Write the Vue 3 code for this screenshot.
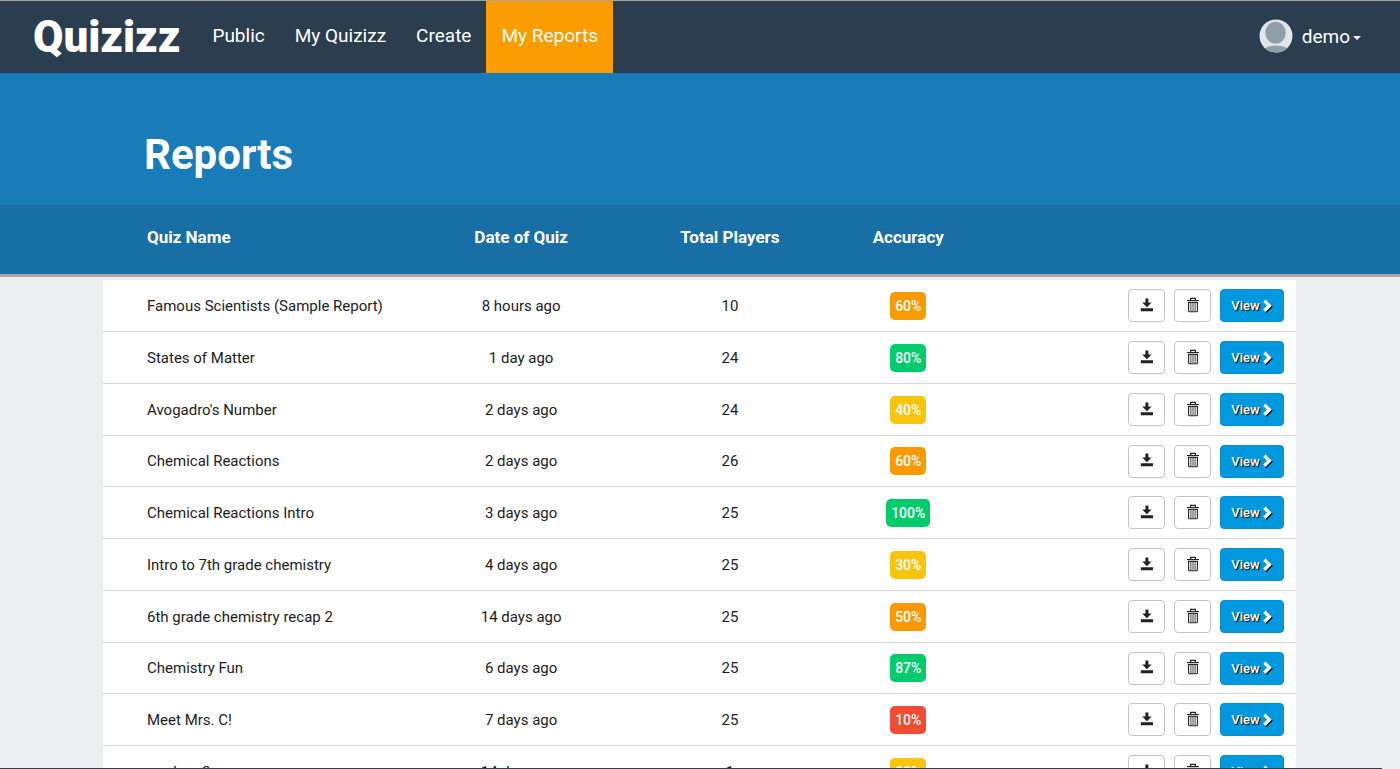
<script setup>
const links = [
  { label: 'Public' },
  { label: 'My Quizizz' },
  { label: 'Create' },
  { label: 'My Reports', active: true },
]

const reports = [
  { name: 'Famous Scientists (Sample Report)', date: '8 hours ago', players: 10, accuracy: 60, tone: 'orange' },
  { name: 'States of Matter', date: '1 day ago', players: 24, accuracy: 80, tone: 'green' },
  { name: "Avogadro's Number", date: '2 days ago', players: 24, accuracy: 40, tone: 'yellow' },
  { name: 'Chemical Reactions', date: '2 days ago', players: 26, accuracy: 60, tone: 'orange' },
  { name: 'Chemical Reactions Intro', date: '3 days ago', players: 25, accuracy: 100, tone: 'green' },
  { name: 'Intro to 7th grade chemistry', date: '4 days ago', players: 25, accuracy: 30, tone: 'yellow' },
  { name: '6th grade chemistry recap 2', date: '14 days ago', players: 25, accuracy: 50, tone: 'orange' },
  { name: 'Chemistry Fun', date: '6 days ago', players: 25, accuracy: 87, tone: 'green' },
  { name: 'Meet Mrs. C!', date: '7 days ago', players: 25, accuracy: 10, tone: 'red' },
  { name: 'random 2', date: '14 days ago', players: 1, accuracy: 30, tone: 'yellow' },
]
</script>

<template>
  <div class="page">
    <header class="topbar">
      <a class="logo" href="#">Quizizz</a>
      <nav class="nav">
        <a
          v-for="link in links"
          :key="link.label"
          href="#"
          class="nav-link"
          :class="{ active: link.active }"
        >{{ link.label }}</a>
      </nav>
      <button class="account" type="button">
        <svg class="avatar" viewBox="0 0 34 34" aria-hidden="true">
          <defs>
            <clipPath id="avatar-clip"><circle cx="17" cy="17" r="16.5" /></clipPath>
          </defs>
          <g clip-path="url(#avatar-clip)">
            <rect width="34" height="34" fill="#e0e6ea" />
            <ellipse cx="16.5" cy="13.8" rx="10.2" ry="11" fill="#8f9ea8" />
            <ellipse cx="17" cy="33.5" rx="14" ry="7" fill="#8f9ea8" />
          </g>
        </svg>
        <span>demo</span>
        <svg class="caret" viewBox="0 0 8 4" aria-hidden="true"><path d="M0 0h8L4 4z" fill="#fff" /></svg>
      </button>
    </header>

    <section class="hero">
      <h1>Reports</h1>
    </section>

    <main class="report">
      <table>
        <thead>
          <tr>
            <th class="name">Quiz Name</th>
            <th class="date">Date of Quiz</th>
            <th class="players">Total Players</th>
            <th class="accuracy">Accuracy</th>
            <td></td>
          </tr>
        </thead>
        <tbody>
          <tr v-for="report in reports" :key="report.name">
            <td class="name">{{ report.name }}</td>
            <td>{{ report.date }}</td>
            <td>{{ report.players }}</td>
            <td><span class="badge" :class="report.tone">{{ report.accuracy }}%</span></td>
            <td>
              <div class="actions">
                <button class="icon-button" type="button" aria-label="Download">
                  <svg viewBox="0 0 14 16" aria-hidden="true">
                    <path d="M5.4 1.5h3v3.9h3.2L6.9 10.2 2.2 5.4h3.2zM.8 11.2h12.2v3H.8z" fill="#222" />
                  </svg>
                </button>
                <button class="icon-button" type="button" aria-label="Delete">
                  <svg viewBox="0 0 14 16" aria-hidden="true">
                    <path d="M4.6 3V1.4h4.8V3M1 3.5h12" fill="none" stroke="#222" stroke-width="1.2" />
                    <path d="M2.6 5.4v8.3q0 1 1 1h6.8q1 0 1-1V5.4z" fill="none" stroke="#222" stroke-width="1.1" />
                    <path d="M4.9 5.5v9M7 5.5v9M9.1 5.5v9" stroke="#444" stroke-width="1" />
                  </svg>
                </button>
                <button class="view-button" type="button">
                  <span>View</span>
                  <svg viewBox="0 0 10 14" aria-hidden="true">
                    <path d="M2.4 2.8l5 5-5 5" fill="none" stroke="#000" stroke-width="3.4" />
                    <path d="M1.4 1.8l5 5-5 5" fill="none" stroke="#fff" stroke-width="3.4" />
                  </svg>
                </button>
              </div>
            </td>
          </tr>
        </tbody>
      </table>
    </main>
    <div class="bottom-edge"></div>
  </div>
</template>

<style>
body {
  background: #ebeff0;
}
</style>

<style scoped>
.page {
  height: 100vh;
  overflow: hidden;
  box-sizing: border-box;
  border-top: 1px solid #a3a39f;
  font-family: Roboto, "Liberation Sans", sans-serif;
  color: #1c1c1c;
}

a {
  color: inherit;
  text-decoration: none;
}

button {
  font: inherit;
  cursor: pointer;
}

.topbar {
  display: flex;
  align-items: stretch;
  height: 72px;
  padding: 0 39px 0 33px;
  background: #2a3e50;
  color: #fff;
}

.logo {
  padding-right: 17px;
  font-size: 44px;
  font-weight: 900;
  line-height: 72px;
}

.nav {
  display: flex;
}

.nav-link {
  padding: 0 15px;
  font-size: 19px;
  line-height: 70px;
}

.nav-link.active {
  background: #fb9c00;
}

.account {
  display: flex;
  align-items: center;
  margin-left: auto;
  padding: 0 0 2px;
  border: 0;
  background: none;
  color: #fff;
  font-size: 19px;
}

.avatar {
  width: 34px;
  height: 34px;
  margin-right: 9px;
}

.caret {
  width: 8px;
  height: 4px;
  margin: 4px 0 0 3px;
}

.hero {
  display: flex;
  align-items: center;
  height: 132px;
  padding: 0 144px;
  background: #1a7bb9;
}

h1 {
  margin: 32px 0 0;
  color: #fff;
  font-size: 42px;
  font-weight: 700;
  line-height: 56px;
}

.report {
  padding: 0 104px 0 103px;
  background: linear-gradient(#186fa6 69px, #a9a6a2 69px, #a9a6a2 72px, #ebeff0 72px);
}

table {
  width: 100%;
  table-layout: fixed;
  border-collapse: separate;
  border-spacing: 0;
}

th,
td {
  box-sizing: border-box;
  padding: 0;
  text-align: center;
}

th {
  height: 75px;
  padding-bottom: 11px;
  color: #fff;
  font-size: 17px;
  font-weight: 700;
}

th.name { width: 26.3%; }
th.date { width: 17.5%; }
th.players { width: 17.5%; }
th.accuracy { width: 12.4%; }

.name {
  padding-left: 44px;
  text-align: left;
}

tbody td {
  height: 52px;
  border-bottom: 1px solid #d5d8d8;
  background: #fff;
  font-size: 15px;
}

tbody tr:nth-child(4n) td {
  height: 51px;
}

.badge {
  display: inline-block;
  padding: 0 5px;
  border-radius: 5px;
  color: #fff;
  font-size: 14px;
  font-weight: 500;
  line-height: 28px;
}

.orange { background: #fb9a00; }
.green { background: #00cc6c; }
.yellow { background: #f8c40c; }
.red { background: #f14b32; }

.actions {
  display: flex;
  justify-content: flex-end;
  gap: 9px;
  padding-right: 12px;
}

.icon-button,
.view-button {
  display: flex;
  align-items: center;
  justify-content: center;
  box-sizing: border-box;
  height: 33px;
  padding: 0;
  border-radius: 4px;
}

.icon-button {
  width: 37px;
  padding-bottom: 2px;
  border: 1px solid #c4c4c4;
  background: #fff;
}

.icon-button svg {
  width: 14px;
  height: 16px;
}

.view-button {
  gap: 3px;
  width: 64px;
  border: 1px solid #0a8dd3;
  background: #0098de;
  color: #fff;
  font-size: 13px;
  font-weight: 500;
  text-shadow: 1px 1px 1px #000;
}

.view-button svg {
  width: 10px;
  height: 14px;
}

.bottom-edge {
  position: fixed;
  bottom: 0;
  left: 0;
  right: 18px;
  height: 1px;
  background: #24435a;
}
</style>
